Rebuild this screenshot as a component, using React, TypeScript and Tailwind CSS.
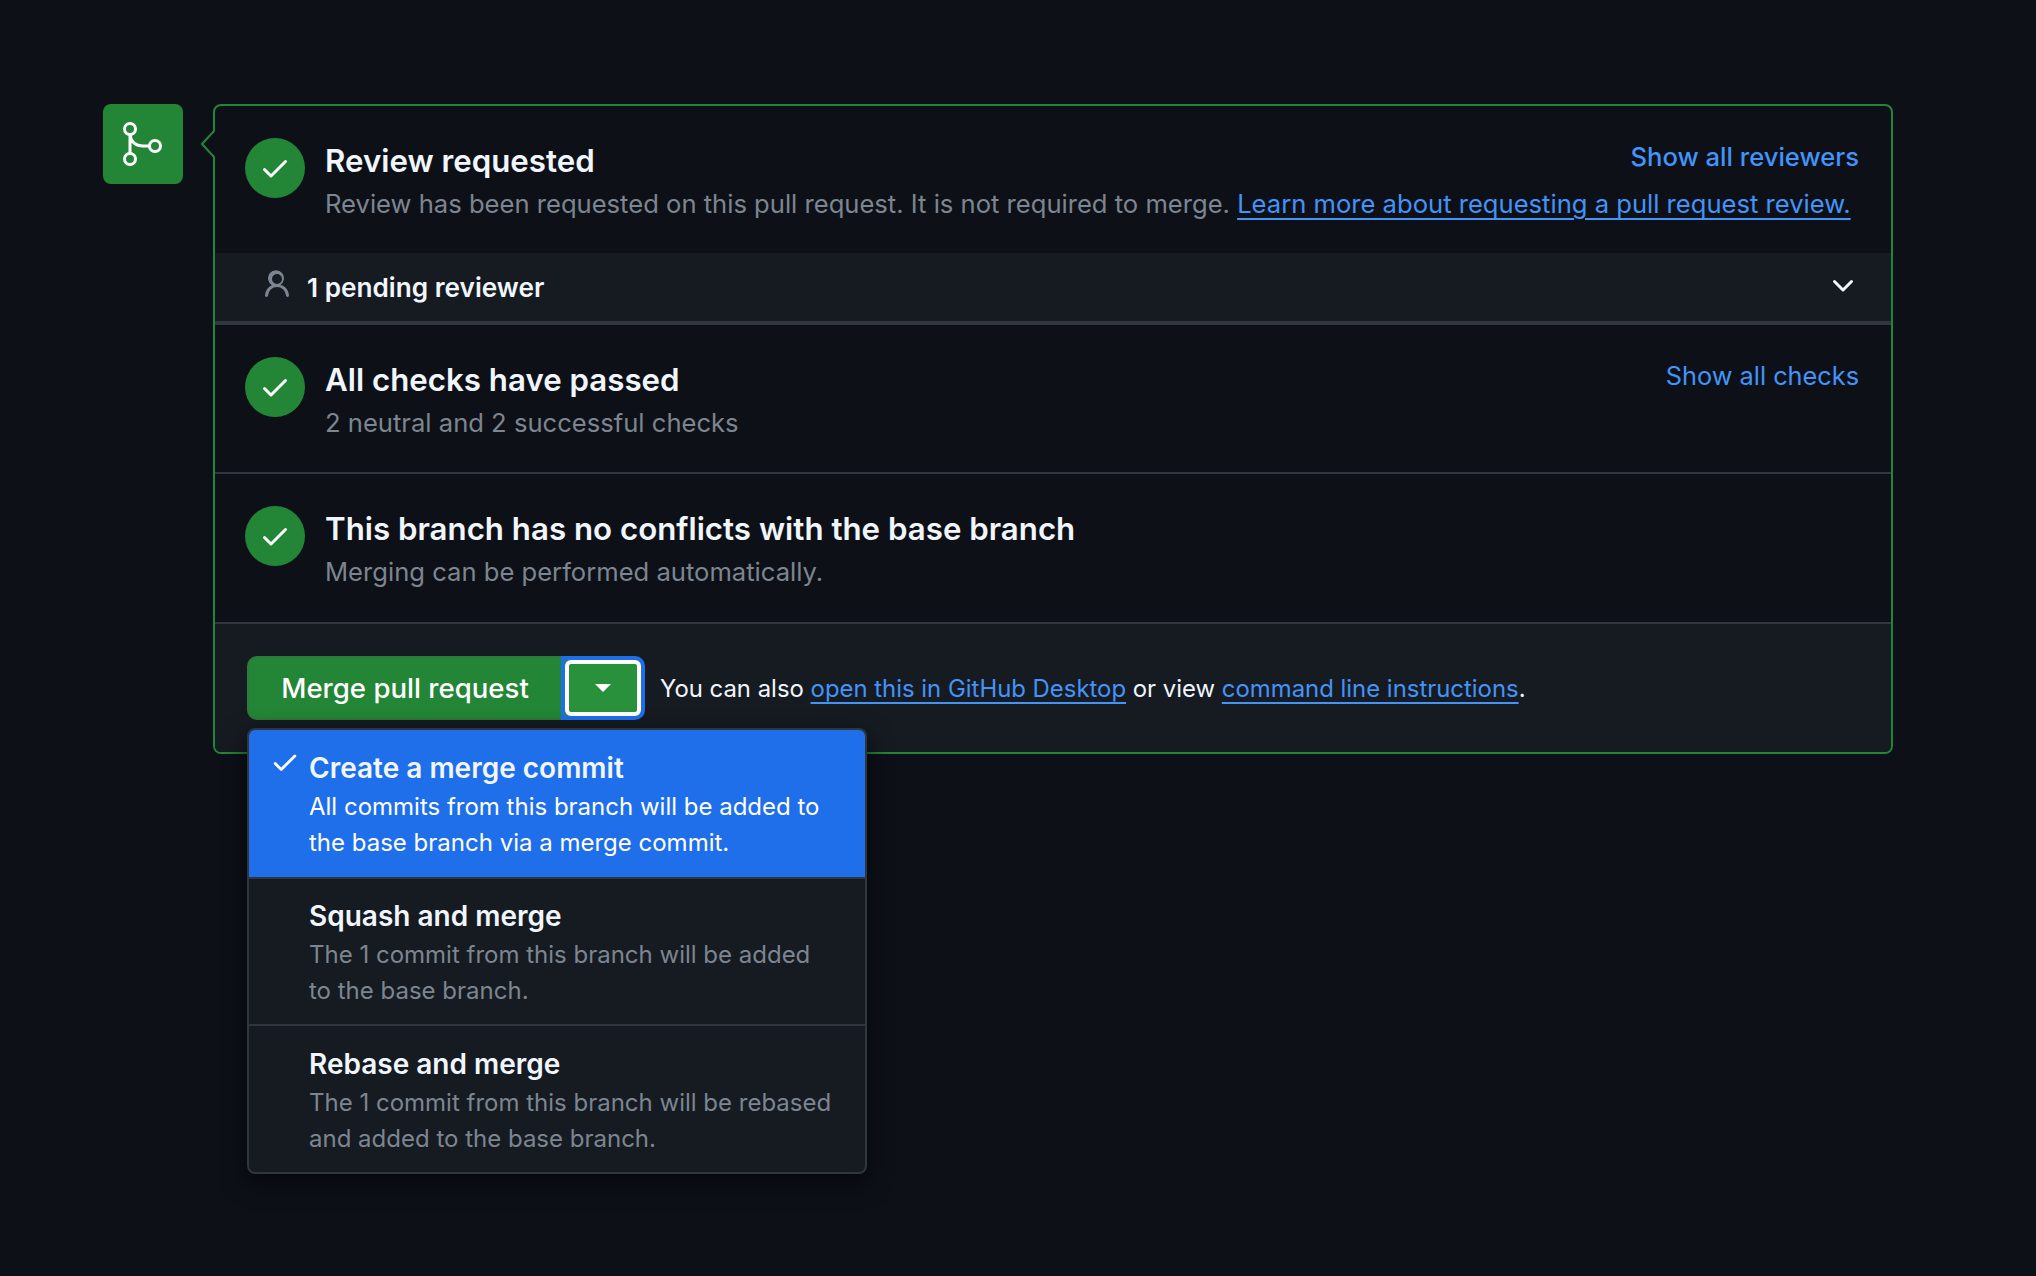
const CHECK =
  "M13.78 4.22a.75.75 0 0 1 0 1.06l-7.25 7.25a.75.75 0 0 1-1.06 0L2.22 9.28a.751.751 0 0 1 .018-1.042.751.751 0 0 1 1.042-.018L6 10.94l6.72-6.72a.75.75 0 0 1 1.06 0Z";
const PERSON =
  "M10.561 8.073a6.005 6.005 0 0 1 3.432 5.142.75.75 0 1 1-1.498.07 4.5 4.5 0 0 0-8.99 0 .75.75 0 0 1-1.498-.07 6.004 6.004 0 0 1 3.431-5.142 3.999 3.999 0 1 1 4.123 0ZM10.5 5a2.5 2.5 0 1 0-5 0 2.5 2.5 0 0 0 5 0Z";
const CHEVRON =
  "M12.78 5.22a.749.749 0 0 1 0 1.06l-4.25 4.25a.749.749 0 0 1-1.06 0L3.22 6.28a.749.749 0 1 1 1.06-1.06L8 8.939l3.72-3.719a.749.749 0 0 1 1.06 0Z";

function Octicon({ d, className }: { d: string; className: string }) {
  return (
    <svg viewBox="0 0 16 16" fill="currentColor" className={className}>
      <path d={d} />
    </svg>
  );
}

function Section({
  title,
  sub,
  action,
  actionClass,
}: {
  title: string;
  sub: React.ReactNode;
  action?: string;
  actionClass?: string;
}) {
  return (
    <div className="h-[147px] pl-[30px] pr-[32px] pt-[32px] flex">
      <div className="w-[60px] h-[60px] rounded-full bg-[#238636] flex items-center justify-center text-white shrink-0">
        <Octicon d={CHECK} className="w-[32px] h-[32px]" />
      </div>
      <div className="ml-[20px] flex-1 min-w-0">
        <div className="flex justify-between items-start">
          <h3 className="text-[31.25px] leading-[44px] mt-[1px] font-semibold text-[#f0f6fc]">
            {title}
          </h3>
          {action && <a className={actionClass}>{action}</a>}
        </div>
        <p className="text-[25.6px] leading-[42px] text-[#7d8590] whitespace-nowrap">
          {sub}
        </p>
      </div>
    </div>
  );
}

function MenuItem({
  title,
  lines,
  selected,
}: {
  title: string;
  lines: string[];
  selected?: boolean;
}) {
  return (
    <div
      className={
        selected
          ? "relative h-[149px] pl-[60px] pt-[18px] bg-[#1f6feb] border-b-2 border-[#30363d] text-white"
          : "relative h-[147px] pl-[60px] pt-[17px] border-b-2 border-[#30363d] last:border-b-0 last:h-[146px] last:pt-[18px]"
      }
    >
      {selected && (
        <Octicon d={CHECK} className="absolute left-[21px] top-[17px] w-[30px] h-[30px]" />
      )}
      <div className="text-[28px] leading-[41px] font-semibold text-[#f0f6fc]">{title}</div>
      {lines.map((line) => (
        <div
          key={line}
          className={
            selected
              ? "text-[24px] leading-[36px] whitespace-nowrap text-white"
              : "text-[24px] leading-[36px] whitespace-nowrap text-[#7d8590]"
          }
        >
          {line}
        </div>
      ))}
    </div>
  );
}

export default function App() {
  return (
    <div className="h-[1276px] bg-[#0d1117] overflow-hidden pt-[104px] pl-[103px] font-['Inter',sans-serif] flex items-start">
      <div className="w-[80px] h-[80px] rounded-[8px] bg-[#238636] shrink-0">
        <svg viewBox="0 0 80 80" fill="none" stroke="white" strokeWidth="3" className="w-[80px] h-[80px]">
          <circle cx="27" cy="25" r="5.5" />
          <circle cx="27" cy="55" r="5.5" />
          <circle cx="52" cy="42" r="5.5" />
          <path d="M27 31V49M27 31C28 38 33 42 40 42H46" />
        </svg>
      </div>
      <div className="relative ml-[30px] w-[1680px] border-2 border-[#238636] rounded-[8px] bg-[#0d1117]">
        <svg viewBox="0 0 14 28" className="absolute left-[-14px] top-[24px] w-[14px] h-[28px]">
          <path d="M14 0 L1 14 L14 28" fill="#0d1117" stroke="#238636" strokeWidth="2" />
        </svg>

        <Section
          title="Review requested"
          action="Show all reviewers"
          actionClass="text-[25.6px] leading-[36px] mt-[1px] font-medium text-[#4493f8]"
          sub={
            <>
              Review has been requested on this pull request. It is not required to merge.{" "}
              <a className="text-[#4493f8] underline decoration-2 underline-offset-[5px]">
                Learn more about requesting a pull request review.
              </a>
            </>
          }
        />

        <div className="h-[72px] bg-[#161b22] border-b-4 border-[#30363d] flex items-center pl-[46px] pr-[32px]">
          <Octicon d={PERSON} className="w-[32px] h-[32px] text-[#7d8590] mt-[-4px]" />
          <span className="ml-[14px] mt-[2px] text-[26.2px] font-semibold text-[#f0f6fc]">
            1 pending reviewer
          </span>
          <Octicon d={CHEVRON} className="ml-auto w-[32px] h-[32px] text-[#f0f6fc] mt-[-3px]" />
        </div>

        <div className="border-b-2 border-[#30363d]">
          <Section
            title="All checks have passed"
            action="Show all checks"
            actionClass="text-[25.3px] leading-[36px] mt-[1px] font-normal text-[#4493f8]"
            sub="2 neutral and 2 successful checks"
          />
        </div>
        <div className="border-b-2 border-[#30363d] pb-[1px]">
          <Section
            title="This branch has no conflicts with the base branch"
            sub="Merging can be performed automatically."
          />
        </div>

        <div className="relative h-[128px] bg-[#161b22] rounded-b-[6px] pl-[32px] flex items-center">
          <button className="w-[314px] h-[64px] pt-[2px] bg-[#238636] rounded-l-[10px] border-2 border-r-0 border-[#2e7a3a] text-[27.6px] font-medium text-white">
            Merge pull request
          </button>
          <button className="w-[84px] h-[64px] bg-[#29903b] rounded-r-[10px] border-[4px] border-[#1f6feb] flex items-center justify-center">
            <span className="w-full h-full rounded-[6px] border-[4px] border-white flex items-center justify-center">
              <span className="w-0 h-0 border-x-[8px] border-x-transparent border-t-[8px] border-t-white" />
            </span>
          </button>
          <p className="ml-[15px] mt-[2px] text-[23.9px] text-[#f0f6fc] whitespace-nowrap">
            You can also{" "}
            <a className="text-[#4493f8] underline decoration-2 underline-offset-[5px]">
              open this in GitHub Desktop
            </a>{" "}
            or view{" "}
            <a className="text-[#4493f8] underline decoration-2 underline-offset-[5px]">
              command line instructions
            </a>
            .
          </p>

          <div className="absolute left-[32px] top-[104px] w-[620px] bg-[#161b22] border-2 border-[#30363d] rounded-[8px] overflow-hidden shadow-[0_8px_24px_rgba(1,4,9,0.75)]">
            <MenuItem
              selected
              title="Create a merge commit"
              lines={["All commits from this branch will be added to", "the base branch via a merge commit."]}
            />
            <MenuItem
              title="Squash and merge"
              lines={["The 1 commit from this branch will be added", "to the base branch."]}
            />
            <MenuItem
              title="Rebase and merge"
              lines={["The 1 commit from this branch will be rebased", "and added to the base branch."]}
            />
          </div>
        </div>
      </div>
    </div>
  );
}
